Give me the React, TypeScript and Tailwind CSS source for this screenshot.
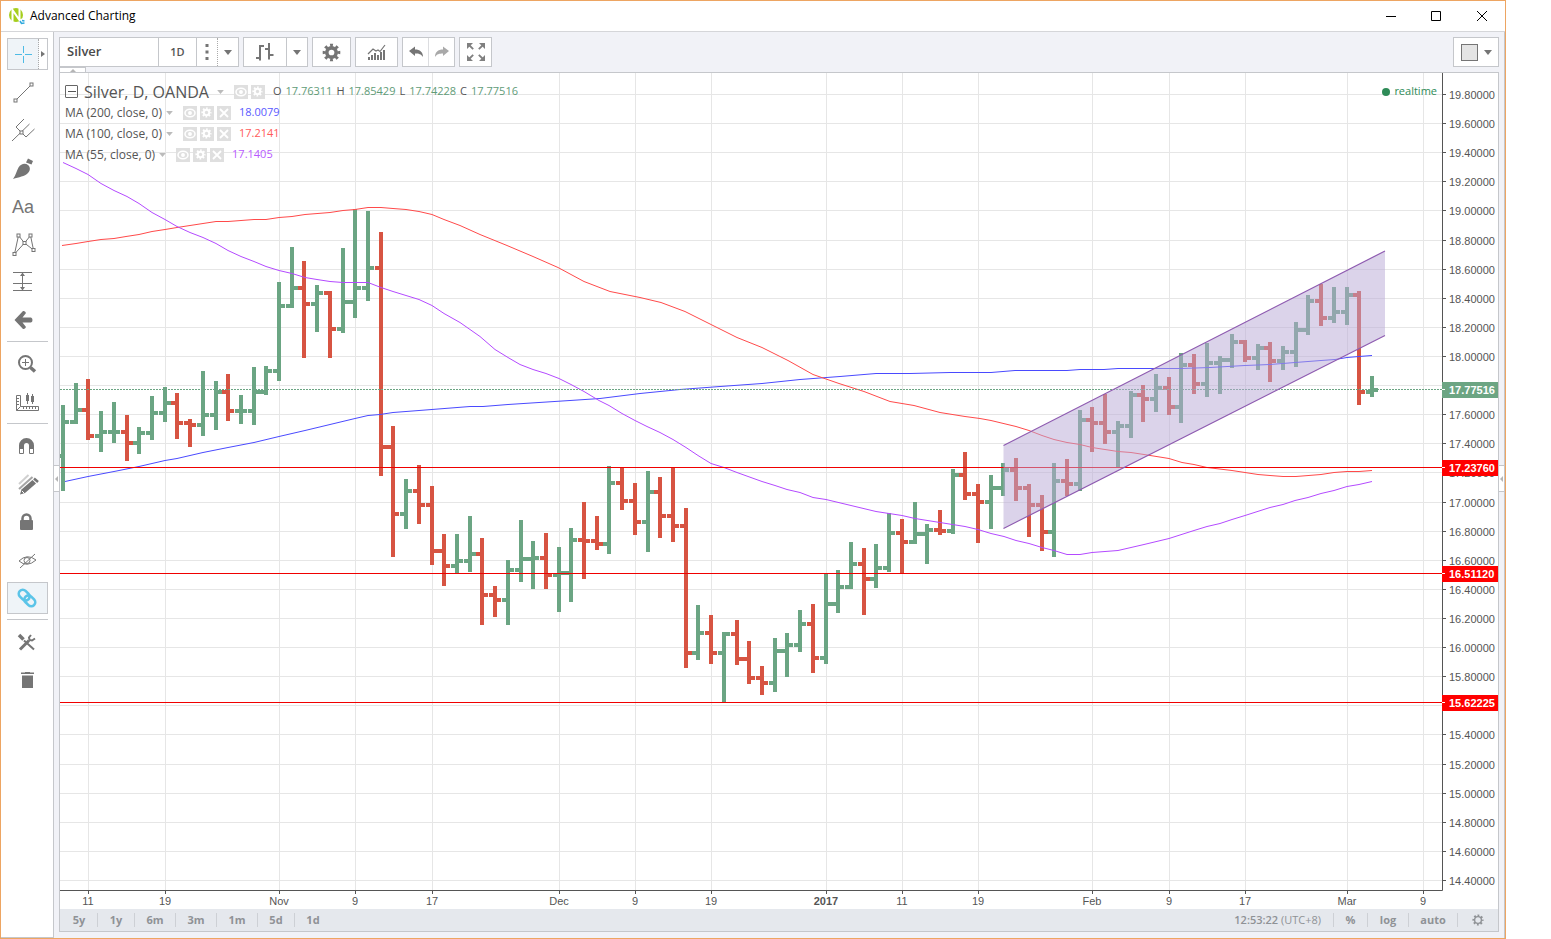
import React from "react";

type Bar = [high: number, low: number, open: number, close: number];

const BARS: Bar[] = [
  [405, 491, 456, 422], [383, 424, 422, 410], [379, 440, 410, 436], [411, 452, 436, 432],
  [402, 443, 432, 432], [415, 461, 432, 443], [427, 454, 443, 433], [396, 440, 433, 413],
  [387, 422, 413, 403], [393, 439, 403, 423], [419, 447, 423, 425], [371, 436, 425, 415],
  [381, 430, 415, 392], [374, 421, 392, 411], [395, 424, 411, 411], [367, 425, 411, 392],
  [366, 395, 392, 371], [282, 381, 371, 306], [247, 308, 306, 288], [261, 358, 288, 304],
  [285, 332, 304, 293], [291, 358, 293, 329], [248, 333, 329, 302], [209, 318, 302, 288],
  [211, 301, 288, 268], [232, 476, 268, 447], [426, 557, 447, 514], [479, 529, 514, 491],
  [465, 524, 491, 505], [486, 565, 505, 551], [534, 586, 551, 566], [534, 573, 566, 561],
  [516, 572, 561, 554], [538, 625, 554, 595], [586, 617, 595, 600], [560, 625, 600, 570],
  [520, 582, 570, 559], [541, 589, 559, 558], [533, 589, 558, 575], [547, 612, 575, 573],
  [528, 602, 573, 540], [502, 579, 540, 541], [516, 550, 541, 544], [466, 554, 544, 483],
  [467, 510, 483, 501], [483, 535, 501, 522], [471, 552, 522, 492], [477, 538, 492, 516],
  [467, 542, 516, 526], [508, 668, 526, 653], [605, 660, 653, 633], [615, 664, 633, 653],
  [632, 702, 653, 634], [620, 665, 634, 659], [641, 684, 659, 678], [666, 695, 678, 683],
  [638, 692, 683, 651], [633, 677, 651, 645], [610, 652, 645, 624], [604, 673, 624, 658],
  [573, 664, 658, 604], [570, 613, 604, 587], [542, 589, 587, 564], [548, 615, 564, 579],
  [544, 588, 579, 568], [513, 572, 568, 533], [519, 573, 533, 542], [502, 544, 542, 534],
  [524, 564, 534, 530], [510, 535, 530, 531], [469, 534, 531, 475], [452, 500, 475, 494],
  [484, 543, 494, 502], [475, 529, 502, 488], [463, 496, 488, 470], [458, 501, 470, 488],
  [484, 537, 488, 505], [495, 551, 505, 532], [463, 557, 532, 481], [459, 496, 481, 484],
  [410, 491, 484, 420], [407, 452, 420, 423], [394, 444, 423, 432], [421, 467, 432, 426],
  [391, 438, 426, 395], [385, 422, 395, 399], [374, 412, 399, 388], [377, 415, 388, 407],
  [353, 423, 407, 365], [354, 394, 365, 384], [343, 397, 384, 363], [356, 394, 363, 360],
  [334, 368, 360, 342], [340, 362, 342, 358], [344, 370, 358, 348], [342, 382, 348, 361],
  [346, 370, 361, 352], [322, 367, 352, 330], [295, 335, 330, 301], [284, 326, 301, 318],
  [287, 323, 318, 312], [287, 325, 312, 295], [291, 405, 295, 392], [376, 397, 392, 390],
];

const MA200 =
  "65,481 88,476 114,471 139,466 165,460 177,458 203,452 228,447 254,442 279,436 305,430 330,424 355,418 368,415 380,414 393,412 419,410 470,406 483,406 508,404 570,400 600,398 640,393 680,389 720,386 762,383 800,379 840,376 876,373 910,373 950,372 991,372 1015,370 1067,370 1080,369 1104,369 1118,368 1181,368 1210,367 1245,365 1270,364 1295,362 1321,360 1335,359 1347,357 1359,356 1372,355";
const MA100 =
  "62,245 76,243 88,241 101,239 114,238 126,236 139,234 152,231 165,229 177,227 216,221 228,221 254,219 266,219 279,217 292,216 305,214 330,212 343,210 355,209 368,207 381,207 393,208 406,209 419,211 432,214 444,219 460,225 480,234 507,245 533,256 558,267 584,281 610,291 640,297 661,302 685,311 711,324 737,337 762,347 788,360 813,374 839,383 864,391 890,401 914,405 940,412 965,416 980,418 991,420 1016,426 1029,430 1042,435 1054,439 1067,442 1080,444 1092,447 1118,451 1131,452 1144,454 1169,458 1182,462 1194,464 1207,467 1232,470 1245,472 1258,474 1270,475 1283,476 1296,476 1321,474 1334,472 1347,471 1359,471 1372,470";
const MA55 =
  "63,162 76,168 88,174 101,183 114,190 127,196 139,203 152,212 165,219 177,226 190,232 203,237 216,243 228,250 241,256 254,261 266,266 279,270 292,273 305,277 317,279 330,281 343,282 368,282 381,287 393,291 406,295 419,299 432,305 444,313 460,322 480,336 495,349 508,357 520,364 533,369 546,373 559,378 571,384 584,391 599,400 609,405 622,413 635,420 647,426 660,432 673,439 686,447 698,455 711,463 724,467 737,472 762,481 775,485 787,489 800,492 813,497 826,499 851,505 876,511 902,515 915,518 940,522 965,526 978,529 991,533 1004,536 1016,540 1029,543 1042,547 1054,550 1067,554 1080,554 1092,552 1118,550 1131,547 1144,544 1169,538 1194,530 1207,526 1220,523 1232,519 1245,515 1270,507 1283,504 1295,500 1308,497 1321,493 1334,490 1347,486 1359,484 1372,481";

const DATES: [number, string][] = [
  [88, "11"], [165, "19"], [279, "Nov"], [355, "9"], [432, "17"], [559, "Dec"], [635, "9"], [711, "19"],
  [826, "2017"], [902, "11"], [978, "19"], [1092, "Feb"], [1169, "9"], [1245, "17"], [1347, "Mar"], [1423, "9"],
];
const PRICES = Array.from({ length: 28 }, (_, i) => ({
  y: Math.round(94 + i * 29.11),
  label: (19.8 - i * 0.2).toFixed(5),
}));
const TAGS = [
  { y: 389, label: "17.77516", color: "#6ca583" },
  { y: 467, label: "17.23760", color: "#ff0000" },
  { y: 573, label: "16.51120", color: "#ff0000" },
  { y: 702, label: "15.62225", color: "#ff0000" },
];
// A price label that falls wholly behind a tag is left out.
const LABELS = PRICES.filter((p) => !TAGS.some((t) => Math.abs(t.y - p.y) < 5));

function Chart() {
  return (
    <svg viewBox="60 73 1438 836" className="block w-full font-['Liberation_Sans',sans-serif] text-[11px]" role="img" aria-label="Silver daily chart">
      <g fill="#e6e6e6">
        {DATES.map(([x]) => <rect key={x} x={x} y="73" width="1" height="817" />)}
        {PRICES.map((p) => <rect key={p.y} x="60" y={p.y} width="1382" height="1" />)}
      </g>
      <g>
        {BARS.map(([high, low, open, close], i) => {
          const x = Math.round(63 + i * 12.709);
          return (
            <g key={i} fill={close > open ? "#d75442" : "#6ba583"}>
              <rect x={x - 2} y={high} width="4" height={low - high} />
              <rect x={x - 6} y={open - 2} width="5" height="4" />
              <rect x={x + 1} y={close - 2} width="5" height="4" />
            </g>
          );
        })}
      </g>
      <g fill="none" strokeWidth="1" transform="translate(0 .5)">
        <polyline points={MA200} stroke="#4a4aff" />
        <polyline points={MA100} stroke="#ff4a4a" />
        <polyline points={MA55} stroke="#b44aff" />
      </g>
      <path d="M60 389.5H1442" stroke="#6ba583" strokeDasharray="2 1" />
      <path d="M60 467.5H1442M60 573.5H1442M60 702.5H1442" stroke="#f00000" />
      <path d="M1003.500 445.500L1385 251V335.500L1003.500 528.500Z" fill="#b8a9d6" fillOpacity=".51" />
      <path d="M1003.500 445.500L1385 251M1003.500 528.500L1385 335.500" stroke="#8e5bb0" strokeWidth="1.200" />
      <path d="M60 890.500H1442.500M1442.500 73V890.500" stroke="#555" />
      <g fill="#555">
        {DATES.map(([x, label]) => (
          <g key={x}>
            <rect x={x} y="891" width="1" height="3" />
            <text x={x} y="905" textAnchor="middle" fontWeight={label === "2017" ? 700 : 400}>{label}</text>
          </g>
        ))}
        {LABELS.map((p) => (
          <g key={p.y}>
            <rect x="1443" y={p.y} width="3" height="1" />
            <text x="1449" y={p.y + 5}>{p.label}</text>
          </g>
        ))}
      </g>
      {TAGS.map((t) => (
        <g key={t.y}>
          <rect x="1442" y={t.y - 7} width="56" height="16" fill={t.color} />
          <rect x="1442" y={t.y} width="3" height="1" fill="#fff" />
          <text x="1449" y={t.y + 5} fill="#fff" fontWeight="700">{t.label}</text>
        </g>
      ))}
    </svg>
  );
}

function Gear({ className, hole = "#fff", radius = 3 }: { className: string; hole?: string; radius?: number }) {
  return (
    <svg viewBox="0 0 20 20" className={className} aria-hidden="true">
      <circle cx="10" cy="10" r="7.600" fill="none" stroke="currentColor" strokeWidth="3.400" pathLength="16" strokeDasharray="1 1" strokeDashoffset=".5" />
      <circle cx="10" cy="10" r="6.800" fill="currentColor" />
      <circle cx="10" cy="10" r={radius} fill={hole} />
    </svg>
  );
}

function Caret({ className }: { className: string }) {
  return (
    <svg viewBox="0 0 10 6" className={className} aria-hidden="true">
      <path d="M0 0H10L5 6Z" fill="currentColor" />
    </svg>
  );
}

const box = (x: number, y: number) => <rect x={x - 1.5} y={y - 1.5} width="3" height="3" fill="#fff" />;

const TOOLS: { label: string; icon: React.ReactNode; rule?: boolean; active?: boolean }[] = [
  { label: "Trend line", icon: <g><path d="M8.500 27.500L24.500 11.500" />{box(8.5, 27.5)}{box(24.5, 11.5)}</g> },
  { label: "Pitchfork", icon: <g><path d="M5 30L22.500 13M9 16L17 8M9 16L19 26L27.500 18" />{box(14.5, 21.5)}</g> },
  { label: "Brush", icon: <path stroke="none" fill="#757575" d="M6 30C9 26 9.500 22 11.500 18.500C14 14.500 18.500 14 21 16C23.500 18 23.500 21.500 21 24C17.500 27.500 12 28 6 30ZM19 13.500L21 9.500L26 12L24.500 15.500Z" /> },
  { label: "Text", icon: <text x="5" y="26" fontSize="18" stroke="none" fill="#757575" fontFamily="Liberation Sans, sans-serif">Aa</text> },
  { label: "Pattern", icon: <g><path d="M7.500 29L11.500 10.500L17.500 18L23.500 10.500L26.500 25L17.500 18L7.500 29" />{box(7.5, 29)}{box(11.5, 10.5)}{box(17.5, 18)}{box(23.5, 10.5)}{box(26.5, 25)}</g> },
  { label: "Prediction and measurement", icon: <g><path d="M6 9.500H25M6 20.500H25M6 27.500H25M15.500 10V27" /><path stroke="none" fill="#757575" d="M15.500 9.500L18 13H13ZM15.500 27.500L18 24H13Z" /></g> },
  { label: "Arrow", icon: <path stroke="none" fill="#757575" d="M7.500 19L16 10Q18 9.500 19 12L15.500 16.500H24Q25.500 17 25.500 19Q25.500 21 24 21.500H15.500L19 26Q18 28.500 16 28Z" /> },
  { label: "Zoom in", rule: true, icon: <g><circle cx="18.500" cy="17.500" r="6.500" strokeWidth="2" /><path d="M15 17.500H22M18.500 14V21" /><path d="M23.500 22.500L28 26.500" strokeWidth="3.500" /></g> },
  { label: "Measure", icon: <g><path d="M9.500 12.500H13.500V23.500H31.500V27.500H9.500ZM9.500 27.500L13.500 23.500" /><path d="M10 15.500H12M10 18.500H12M10 21.500H12M16.500 26V24M19.500 26V24M22.500 26V24M25.500 26V24M28.500 26V24M20.500 10V21M25.500 11V21" /><path strokeWidth="3" d="M20.500 12V18M25.500 13V19" /></g> },
  { label: "Magnet mode", rule: true, icon: <g><path d="M14.500 22V18.500A5 5 0 0 1 24.500 18.500V22" strokeWidth="5" /><path d="M12.500 22V26.500H16.500V22M22.500 22V26.500H26.500V22" fill="#fff" /></g> },
  { label: "Stay in drawing mode", icon: <g><path d="M12 19L21.500 10" stroke="#d0d0d0" strokeWidth="2" /><path d="M12 24L25.500 12" stroke="#a5a5a5" strokeWidth="2" /><path d="M13 29.500L14.500 24.500L25.500 15L29 18.500L18 28Z" stroke="none" fill="#757575" /><path d="M27 13.500L31 17" strokeWidth="2.500" /><path d="M15 26L17 28" stroke="#fff" /></g> },
  { label: "Lock drawings", icon: <g><path d="M15.500 18V15.500A4 4 0 0 1 23.500 15.500V18" strokeWidth="2.500" /><rect x="13" y="17" width="13" height="10" rx="1" fill="#757575" stroke="none" /></g> },
  { label: "Hide drawings", icon: <g><path d="M12 20Q20 12 29 19Q20 27 12 20ZM13 27L28 13" /><circle cx="20" cy="19.500" r="3" /></g> },
  { label: "Link", active: true, icon: <g stroke="#5bc4e8" strokeWidth="2.600" transform="translate(20 19) rotate(45)"><rect x="-10" y="-4" width="12" height="8" rx="4" /><rect x="-2" y="-4" width="12" height="8" rx="4" /></g> },
  { label: "Object settings", rule: true, icon: <g><path d="M13 26.500L22 17.500" strokeWidth="3" /><path d="M17 17.500L27 26.500" strokeWidth="2" /><path d="M12 12L16.500 16.500" strokeWidth="3.500" /><path d="M24 12L22 14.500L22.500 17L25 17.500L28 15.500" strokeWidth="2" /></g> },
  { label: "Remove drawings", icon: <path stroke="none" fill="#757575" d="M14 13V11.500H18V11H23V11.500H27V13ZM15 14.500H26V27H15Z" /> },
];

function Sidebar() {
  return (
    <aside className="flex w-[53px] shrink-0 flex-col border-r border-b border-[#c5c7cb] bg-white pt-1.5 pl-1.5">
      <div className="mb-[3px] flex h-8 w-[41px] border border-[#c5c7cb]">
        <button aria-label="Cross" className="w-[31px] border-r border-dotted border-[#aaa] bg-[#eff4f8]">
          <svg viewBox="0 0 30 30" className="h-[30px] w-[30px]" stroke="#4dbbe5" fill="none">
            <path d="M7 15.500H14M17 15.500H24M15.500 7V14M15.500 17V24" />
          </svg>
        </button>
        <button aria-label="More cursors" className="flex flex-1 items-center justify-center">
          <svg viewBox="0 0 4 6" className="h-1.5 w-1"><path d="M0 0L4 3L0 6Z" fill="#757575" /></svg>
        </button>
      </div>
      {TOOLS.map((t) => (
        <React.Fragment key={t.label}>
          {t.rule && <hr className="mt-0.5 mb-[3px] w-[41px] border-t border-[#c5c7cb]" />}
          <button aria-label={t.label} className="flex h-[38px] w-[41px] items-center">
            <span className={t.active ? "flex h-8 items-center border border-[#c5c7cb] bg-[#eff4f8]" : "flex h-8 items-center border border-transparent"}>
              <svg viewBox="1 4 39 30" className="h-[30px] w-[39px]" fill="none" stroke="#757575">{t.icon}</svg>
            </span>
          </button>
        </React.Fragment>
      ))}
    </aside>
  );
}

const group = "flex h-[30px] border border-[#c5c7cb] bg-white text-[#757575]";
const cell = "flex items-center justify-center";

function Toolbar() {
  return (
    <div className="flex h-10 items-start justify-between pt-[5px]">
      <div className="flex gap-1">
        <div className={group}>
          <input aria-label="Symbol" defaultValue="Silver" className="w-[99px] border-r border-[#c5c7cb] px-[7px] text-[13px] font-semibold text-[#4a4a4a] outline-none" />
          <button className={cell + " w-[38px] border-r border-[#c5c7cb] text-[11px] font-semibold text-[#555]"}>1D</button>
          <button aria-label="Intervals" className={cell + " w-[21px] border-r border-dotted border-[#aaa]"}>
            <svg viewBox="0 0 4 16" className="h-4 w-1"><path d="M.5 0h3v3h-3zM.5 6.500h3v3h-3zM.5 13h3v3h-3z" fill="#757575" /></svg>
          </button>
          <button aria-label="Interval list" className={cell + " w-5"}><Caret className="h-[5px] w-2" /></button>
        </div>
        <div className={group}>
          <button aria-label="Bars" className={cell + " w-[43px] border-r border-[#c5c7cb]"}>
            <svg viewBox="0 0 18 18" className="h-[18px] w-[18px]" fill="#757575"><path d="M0 14H3V2H8V4H5V17.500H3V16H0ZM9 5H12V0H14V11H17.500V13H14V16.500H12V7H9Z" /></svg>
          </button>
          <button aria-label="Chart styles" className={cell + " w-5"}><Caret className="h-[5px] w-2" /></button>
        </div>
        <div className={group}><button aria-label="Settings" className={cell + " w-[37px]"}><Gear className="h-[19px] w-[19px]" /></button></div>
        <div className={group}>
          <button aria-label="Indicators" className={cell + " w-[41px]"}>
            <svg viewBox="0 0 19 17" className="h-[17px] w-[19px]" fill="#757575">
              <path d="M1 13h2v3H1zM4 11h2v5H4zM7 9h2v7H7zM10 11h2v5h-2zM13 8h2v8h-2zM16 6h2v10h-2z" />
              <path d="M1 10L6 5L9 7L11 6L13 7.500L18 1" fill="none" stroke="#757575" strokeWidth="1.200" />
            </svg>
          </button>
        </div>
        <div className={group}>
          <button aria-label="Undo" className={cell + " w-[26px] border-r border-[#dcdde0]"}>
            <svg viewBox="0 0 14 12" className="h-3 w-3.5"><path d="M0 5L6 .5V3.500C11 3.500 14 6 14 11C12 8 10 7.500 6 7.500V10Z" fill="#757575" /></svg>
          </button>
          <button aria-label="Redo" className={cell + " w-[25px]"}>
            <svg viewBox="0 0 14 12" className="h-3 w-3.5"><path d="M14 5L8 .5V3.500C3 3.500 0 6 0 11C2 8 4 7.500 8 7.500V10Z" fill="#a9a9a9" /></svg>
          </button>
        </div>
        <div className={group}>
          <button aria-label="Full screen" className={cell + " w-[31px]"}>
            <svg viewBox="0 0 18 18" className="h-[18px] w-[18px]" fill="#808080" stroke="#808080" strokeWidth="1.800">
              <path stroke="none" d="M0 0H6L0 6ZM18 0V6L12 0ZM0 18V12L6 18ZM18 18H12L18 12Z" />
              <path d="M2 2L6.200 6.200M16 2L11.800 6.200M2 16L6.200 11.800M16 16L11.800 11.800" />
            </svg>
          </button>
        </div>
      </div>
      <div className={group}>
        <button aria-label="Layout" className={cell + " w-11 gap-1.5"}>
          <span className="h-[17px] w-[17px] border border-[#757575] bg-[#e4e4e4]" />
          <Caret className="h-[5px] w-2" />
        </button>
      </div>
    </div>
  );
}

const chip = "flex h-3.5 w-3.5 items-center justify-center bg-[#dfdfdf] text-white";

function Chips({ close }: { close?: boolean }) {
  return (
    <span className="flex gap-[3px]">
      <button aria-label="Hide" className={chip}>
        <svg viewBox="0 0 12 12" className="h-3 w-3" fill="none" stroke="#fff" strokeWidth="1.500"><ellipse cx="6" cy="6" rx="5" ry="3.800" /><circle cx="6" cy="6" r="1.200" fill="#fff" /></svg>
      </button>
      <button aria-label="Format" className={chip}><Gear className="h-[11px] w-[11px]" hole="#dfdfdf" /></button>
      {close && (
        <button aria-label="Remove" className={chip}>
          <svg viewBox="0 0 10 10" className="h-2.5 w-2.5" stroke="#fff" strokeWidth="1.800"><path d="M1 1L9 9M9 1L1 9" /></svg>
        </button>
      )}
    </span>
  );
}

const OHLC = [["O", "17.76311"], ["H", "17.85429"], ["L", "17.74228"], ["C", "17.77516"]];

function Legend() {
  return (
    <div className="absolute top-2 left-[5px] text-[11px] text-[#555]">
      <div className="flex h-[21px] items-center">
        <button aria-label="Collapse" className="flex h-[13px] w-[13px] items-center justify-center rounded-[1px] border border-[#666]">
          <span className="h-px w-2 bg-[#555]" />
        </button>
        <span className="ml-1.5 text-[16px]">Silver, D, OANDA</span>
        <Caret className="mr-2.5 ml-2 h-1 w-[7px] text-[#bbb]" />
        <Chips />
        <span className="ml-2 flex gap-1">
          {OHLC.map(([k, v]) => (
            <React.Fragment key={k}><span>{k}</span><span className="text-[#5f9c78]">{v}</span></React.Fragment>
          ))}
        </span>
      </div>
      {[["MA (200, close, 0)", "18.0079"], ["MA (100, close, 0)", "17.2141"], ["MA (55, close, 0)", "17.1405"]].map(([name, value], i) => (
        <div key={name} className="flex h-[21px] items-center">
          <span className="text-[12px]">{name}</span>
          <Caret className="mr-2.5 ml-1 h-1 w-[7px] text-[#bbb]" />
          <Chips close />
          <span className={["ml-2 text-[#5a5aff]", "ml-2 text-[#ff5a5a]", "ml-2 text-[#b85aff]"][i]}>{value}</span>
        </div>
      ))}
    </div>
  );
}

function BottomBar() {
  const sep = <span className="h-3.5 w-px bg-[#cdd0d5]" />;
  return (
    <div className="flex h-[22px] items-center justify-between bg-[#e5e8ed] text-[11px] font-bold text-[#8f9296]">
      <div className="flex items-center pl-px">
        {["5y", "1y", "6m", "3m", "1m", "5d", "1d"].map((r, i) => (
          <React.Fragment key={r}>
            {i > 0 && sep}
            <button className={r.endsWith("m") ? "w-10" : "w-9"}>{r}</button>
          </React.Fragment>
        ))}
      </div>
      <div className="flex items-center">
        <span className="mr-3 font-semibold">12:53:22 <span className="font-normal">(UTC+8)</span></span>
        {sep}
        <button className="w-[33px]">%</button>
        {sep}
        <button className="w-10">log</button>
        {sep}
        <button className="w-12">auto</button>
        {sep}
        <button aria-label="Scale settings" className="flex w-10 justify-center"><Gear className="h-3 w-3" hole="#e5e8ed" radius={4.5} /></button>
      </div>
    </div>
  );
}

export default function App() {
  return (
    <div className="min-h-screen bg-white font-['Open_Sans',sans-serif]">
      <div className="mr-[45px] border border-[#eda562] bg-white">
        <header className="flex h-[31px] items-center border-b border-[#d5d6d9] pl-2">
          <svg viewBox="0 0 17 17" className="h-[17px] w-[17px]" aria-hidden="true">
            <circle cx="7" cy="7" r="7" fill="#a6ce1e" />
            <path d="M3.500 14V2L10.500 12V0" fill="none" stroke="#fff" strokeWidth="2" />
            <circle cx="13.500" cy="14" r="3.500" fill="#fff" />
            <path d="M11 13L12.500 15.500L15.500 15M13 12.500L15.500 13" stroke="#2fa9dd" strokeWidth="1.500" fill="none" />
          </svg>
          <h1 className="ml-1 text-[12px] text-black">Advanced Charting</h1>
          <div className="ml-auto flex">
            <button aria-label="Minimize" className="flex h-[30px] w-[45px] items-center justify-center"><svg viewBox="0 0 10 10" className="h-2.5 w-2.5" stroke="#000"><path d="M0 5.500H10" /></svg></button>
            <button aria-label="Maximize" className="flex h-[30px] w-[45px] items-center justify-center"><svg viewBox="0 0 10 10" className="h-2.5 w-2.5" stroke="#000" fill="none"><path d="M.5 .5H9.500V9.500H.5Z" /></svg></button>
            <button aria-label="Close" className="flex h-[30px] w-[47px] items-center justify-center"><svg viewBox="0 0 10 10" className="h-2.5 w-2.5" stroke="#000"><path d="M0 0L10 10M10 0L0 10" /></svg></button>
          </div>
        </header>
        <div className="flex bg-[#f1f2f7]">
          <Sidebar />
          <main className="relative min-w-0 flex-1 border-r border-[#c5c7cb] px-[5px] pb-1.5">
            <Toolbar />
            <button aria-label="Hide toolbar" className="absolute top-[35px] left-[5px] flex h-1.5 w-[27px] items-center justify-center border border-[#c5c7cb] bg-white">
              <svg viewBox="0 0 6 3" className="h-[3px] w-1.5"><path d="M3 0L6 3H0Z" fill="#b5b5b5" /></svg>
            </button>
            <button aria-label="Hide tools" className="absolute top-[433px] left-0 flex h-[27px] w-[5px] items-center justify-center border-y border-[#c5c7cb] bg-white">
              <svg viewBox="0 0 3 6" className="h-1.5 w-[3px]"><path d="M0 3L3 0V6Z" fill="#b5b5b5" /></svg>
            </button>
            <button aria-label="Show panel" className="absolute top-[433px] right-0 flex h-[27px] w-[5px] items-center justify-center border-y border-[#c5c7cb] bg-white">
              <svg viewBox="0 0 3 6" className="h-1.5 w-[3px]"><path d="M0 3L3 0V6Z" fill="#b5b5b5" /></svg>
            </button>
            <div className="border border-[#c5c7cb] bg-white">
              <div className="relative">
                <Chart />
                <Legend />
                <div className="absolute top-2 right-[61px] flex h-[21px] items-center gap-1 text-[11px] text-[#2e8b57]">
                  <span className="h-2 w-2 rounded-full bg-[#2e8b57]" />
                  realtime
                </div>
              </div>
              <BottomBar />
            </div>
          </main>
        </div>
      </div>
    </div>
  );
}
